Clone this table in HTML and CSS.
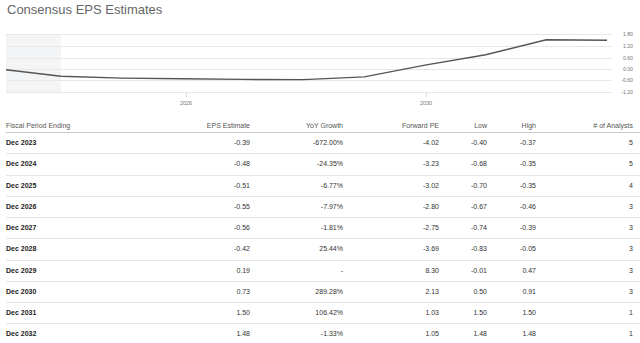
FILE: index.html
```html
<!DOCTYPE html>
<html>
<head>
<meta charset="utf-8">
<link rel="stylesheet" href="styles.css">
</head>
<body>
<h1 class="title">Consensus EPS Estimates</h1>
<svg class="chart" width="640" height="96" viewBox="0 20 640 96">
  <rect x="6" y="34" width="55" height="59" fill="#f3f4f6"/>
  <g stroke="#e8e8e8" stroke-width="1">
    <line x1="6" x2="612" y1="34.5" y2="34.5"/>
    <line x1="6" x2="612" y1="46.5" y2="46.5"/>
    <line x1="6" x2="612" y1="58.5" y2="58.5"/>
    <line x1="6" x2="612" y1="69.5" y2="69.5"/>
    <line x1="6" x2="612" y1="80.5" y2="80.5"/>
    <line x1="6" x2="612" y1="92.5" y2="92.5"/>
  </g>
  <g stroke="#d8d8d8" stroke-width="1">
    <line x1="186.5" x2="186.5" y1="93" y2="97"/>
    <line x1="426.5" x2="426.5" y1="93" y2="97"/>
  </g>
  <polyline fill="none" stroke="#555" stroke-width="1.4" stroke-linejoin="round"
    points="6,69.7 61,76.3 121.7,78.1 182.3,78.7 243,79.4 303.7,79.6 364.3,76.9 425,65.1 485.7,54.7 546.3,39.8 607,40.2"/>
  <g class="ylab" text-anchor="end">
    <text x="633" y="36.3">1.80</text>
    <text x="633" y="48.3">1.20</text>
    <text x="633" y="60.3">0.60</text>
    <text x="633" y="71.3">0.00</text>
    <text x="633" y="82.3">-0.60</text>
    <text x="633" y="94.3">-1.20</text>
  </g>
  <g class="xlab" text-anchor="middle">
    <text x="186" y="104.5">2026</text>
    <text x="426" y="104.5">2030</text>
  </g>
</svg>
<table class="est">
  <colgroup>
    <col class="c1"><col class="c2"><col class="c3"><col class="c4"><col class="c5"><col class="c6"><col class="c7">
  </colgroup>
  <thead>
    <tr><th class="l">Fiscal Period Ending</th><th>EPS Estimate</th><th>YoY Growth</th><th>Forward PE</th><th>Low</th><th>High</th><th class="last">#&nbsp;of Analysts</th></tr>
  </thead>
  <tbody>
    <tr><td class="l">Dec 2023</td><td>-0.39</td><td>-672.00%</td><td>-4.02</td><td>-0.40</td><td>-0.37</td><td class="last">5</td></tr>
    <tr><td class="l">Dec 2024</td><td>-0.48</td><td>-24.35%</td><td>-3.23</td><td>-0.68</td><td>-0.35</td><td class="last">5</td></tr>
    <tr><td class="l">Dec 2025</td><td>-0.51</td><td>-6.77%</td><td>-3.02</td><td>-0.70</td><td>-0.35</td><td class="last">4</td></tr>
    <tr><td class="l">Dec 2026</td><td>-0.55</td><td>-7.97%</td><td>-2.80</td><td>-0.67</td><td>-0.46</td><td class="last">3</td></tr>
    <tr><td class="l">Dec 2027</td><td>-0.56</td><td>-1.81%</td><td>-2.75</td><td>-0.74</td><td>-0.39</td><td class="last">3</td></tr>
    <tr><td class="l">Dec 2028</td><td>-0.42</td><td>25.44%</td><td>-3.69</td><td>-0.83</td><td>-0.05</td><td class="last">3</td></tr>
    <tr><td class="l">Dec 2029</td><td>0.19</td><td>-</td><td>8.30</td><td>-0.01</td><td>0.47</td><td class="last">3</td></tr>
    <tr><td class="l">Dec 2030</td><td>0.73</td><td>289.28%</td><td>2.13</td><td>0.50</td><td>0.91</td><td class="last">3</td></tr>
    <tr><td class="l">Dec 2031</td><td>1.50</td><td>106.42%</td><td>1.03</td><td>1.50</td><td>1.50</td><td class="last">1</td></tr>
    <tr><td class="l">Dec 2032</td><td>1.48</td><td>-1.33%</td><td>1.05</td><td>1.48</td><td>1.48</td><td class="last">1</td></tr>
  </tbody>
</table>
</body>
</html>
```

FILE: styles.css
```css
html, body {
  margin: 0;
  padding: 0;
  background: #fff;
  overflow: hidden;
}
body {
  font-family: "Liberation Sans", Arial, sans-serif;
  color: #222;
}
.title {
  margin: 0;
  padding: 2px 0 0 7px;
  height: 18px;
  font-size: 13px;
  line-height: 16px;
  font-weight: normal;
  color: #666;
}
.chart {
  display: block;
}
.ylab text {
  font-size: 5.2px;
  fill: #777;
  font-family: "Liberation Sans", Arial, sans-serif;
}
.xlab text {
  font-size: 5.5px;
  fill: #777;
  font-family: "Liberation Sans", Arial, sans-serif;
}
.est {
  margin-left: 6px;
  width: 634px;
  table-layout: fixed;
  border-collapse: separate;
  border-spacing: 0;
  font-size: 7px;
}
.c1 { width: 144px; }
.c2 { width: 100px; }
.c3 { width: 93px; }
.c4 { width: 96px; }
.c5 { width: 48px; }
.c6 { width: 49px; }
.c7 { width: 104px; }
.est th {
  font-weight: normal;
  color: #555;
  text-align: right;
  padding: 5px 0 2px 0;
  line-height: 9px;
  border-bottom: 1px solid #c8c8c8;
  white-space: nowrap;
}
.est td {
  text-align: right;
  padding: 0;
  line-height: 20.25px;
  border-bottom: 1px solid #e6e6e6;
  color: #333;
  white-space: nowrap;
}
.est .l {
  text-align: left;
}
.est td.l {
  font-weight: bold;
  color: #222;
}
.est .last {
  padding-right: 7px;
}
```
